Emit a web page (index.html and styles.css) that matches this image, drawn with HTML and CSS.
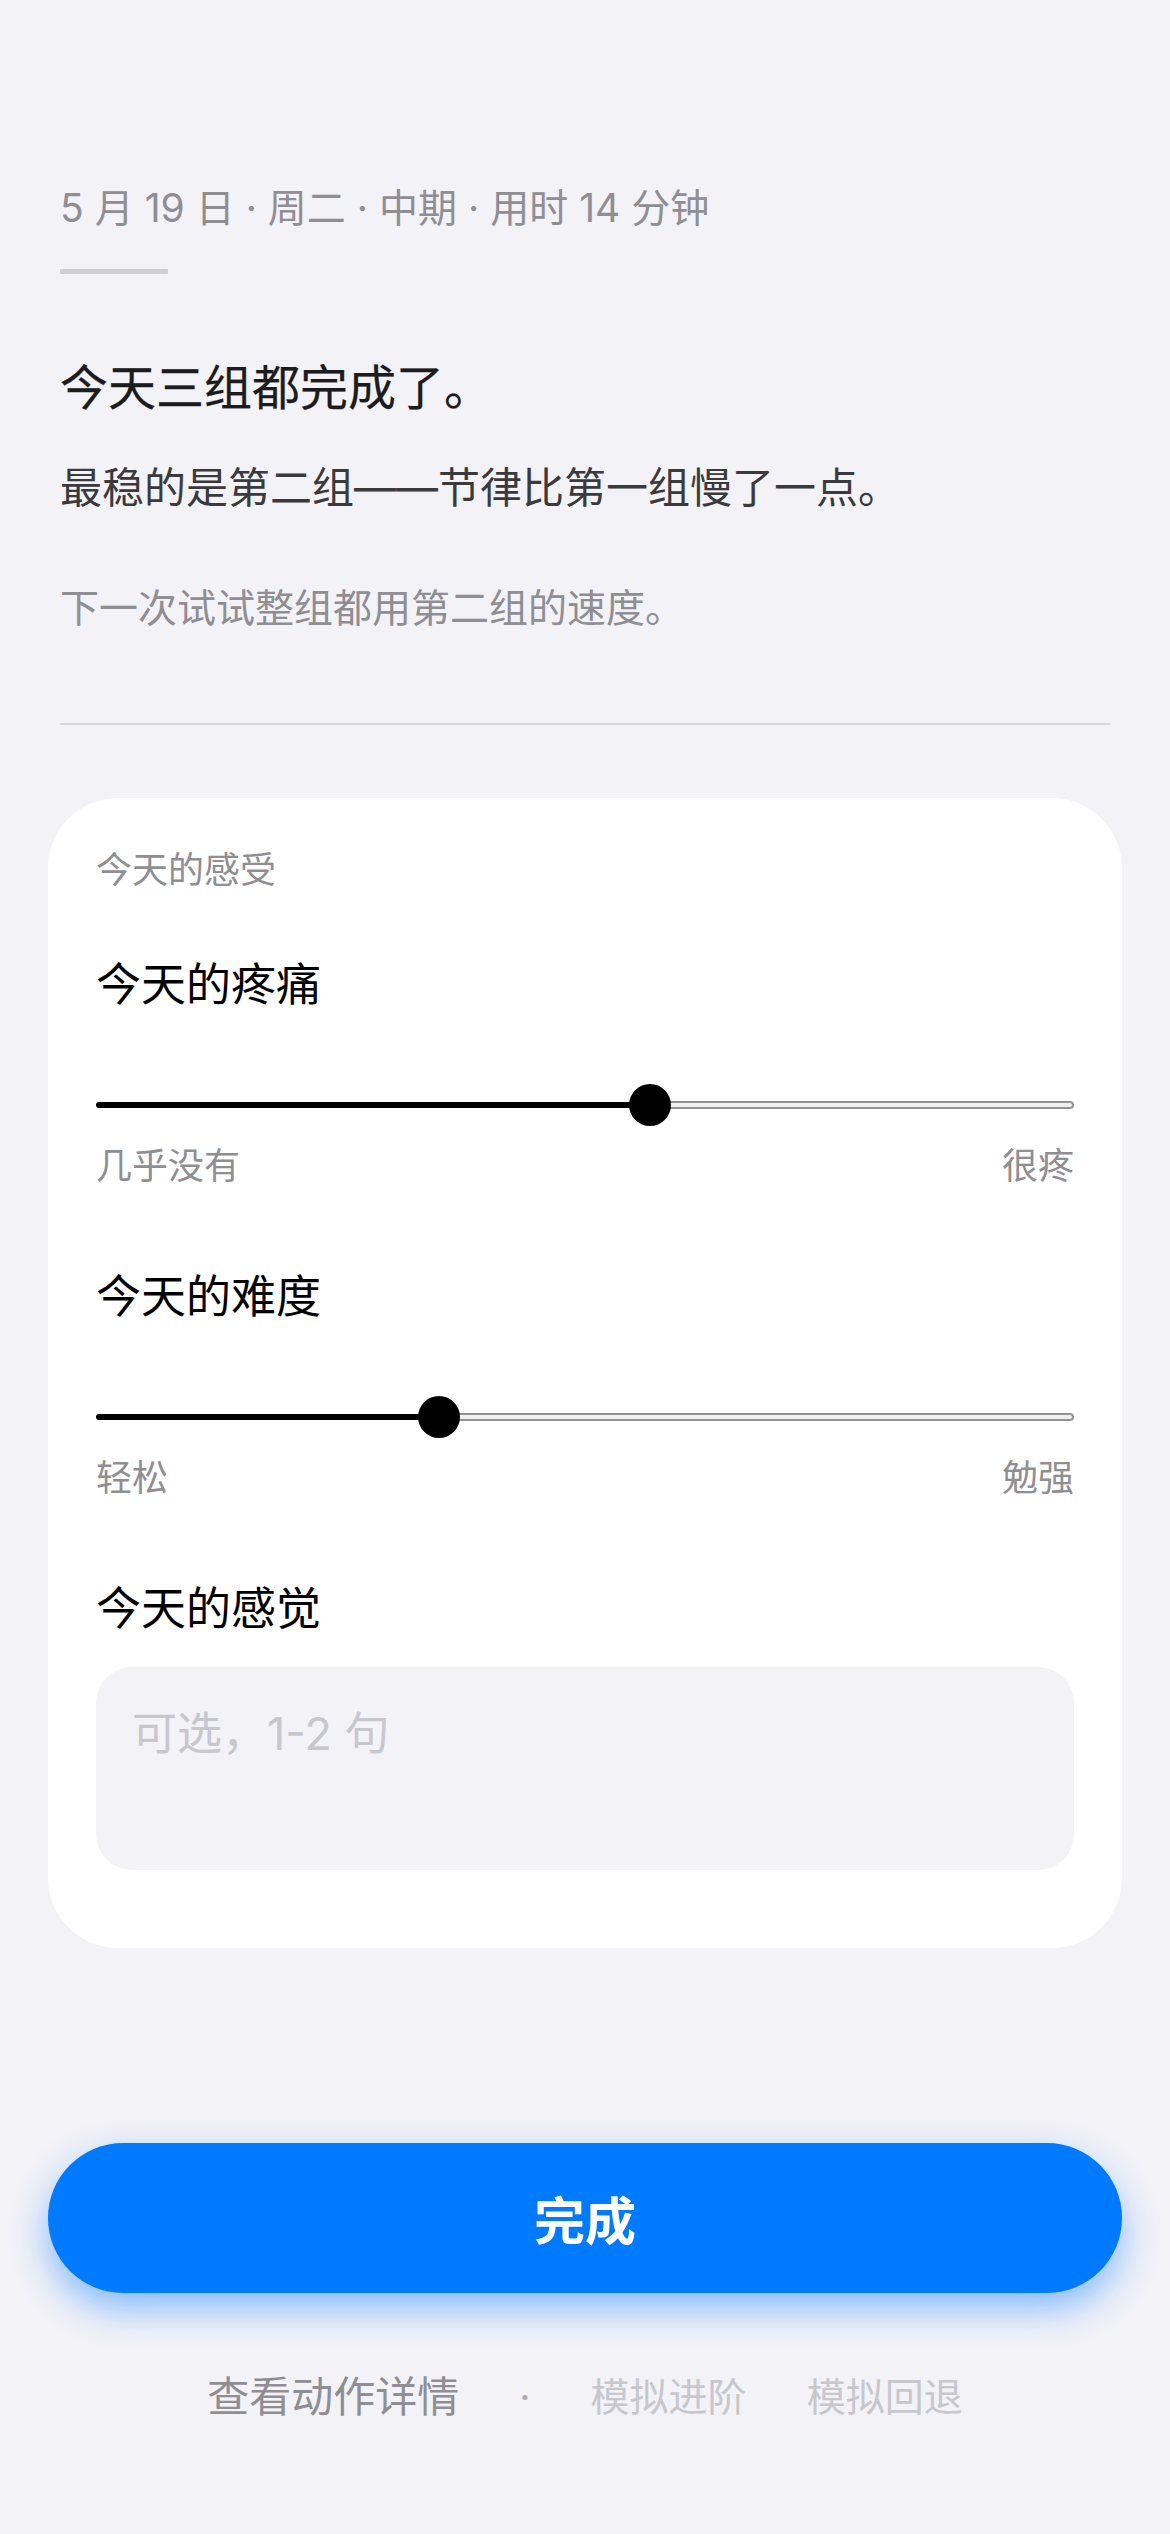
FILE: index.html
```html
<!DOCTYPE html>
<html lang="zh-CN">
<head>
<meta charset="utf-8">
<title>今天的训练</title>
<link rel="stylesheet" href="styles.css">
</head>
<body>
<main class="screen">
  <section class="summary">
    <p class="date">5 月 19 日 · 周二 · 中期 · 用时 14 分钟</p>
    <div class="rule-short"></div>
    <h1 class="headline">今天三组都完成了。</h1>
    <p class="detail">最稳的是第二组——节律比第一组慢了一点。</p>
    <p class="hint">下一次试试整组都用第二组的速度。</p>
    <div class="rule-long"></div>
  </section>

  <section class="card">
    <p class="card-label">今天的感受</p>

    <h2 class="item-title first">今天的疼痛</h2>
    <div class="slider">
      <div class="fill" style="width: 56.6%"></div>
      <div class="thumb"></div>
      <div class="rest"></div>
    </div>
    <div class="scale-labels"><span>几乎没有</span><span>很疼</span></div>

    <h2 class="item-title">今天的难度</h2>
    <div class="slider">
      <div class="fill" style="width: 35.1%"></div>
      <div class="thumb"></div>
      <div class="rest"></div>
    </div>
    <div class="scale-labels"><span>轻松</span><span>勉强</span></div>

    <h2 class="item-title">今天的感觉</h2>
    <div class="note"><span class="placeholder">可选，1-2 句</span></div>
  </section>

  <button class="done-btn" type="button">完成</button>

  <nav class="links">
    <span class="link-main">查看动作详情</span>
    <span class="link-dot">·</span>
    <span class="link-dim">模拟进阶</span>
    <span class="link-dim">模拟回退</span>
  </nav>
</main>
</body>
</html>
```

FILE: styles.css
```css
* {
  box-sizing: border-box;
}

html, body {
  margin: 0;
  padding: 0;
}

body {
  background: #f2f2f7;
  font-family: Inter, "Noto Sans CJK SC", "Noto Sans", sans-serif;
  color: #000;
  width: 1170px;
  min-height: 2534px;
}

.screen {
  display: flex;
  flex-direction: column;
  padding-top: 181px;
}

.summary {
  display: flex;
  flex-direction: column;
  padding: 0 60px;
}

.date {
  margin: 0;
  font-size: 39px;
  line-height: 54px;
  color: #8e8e93;
}

.rule-short {
  margin-top: 34px;
  width: 108px;
  height: 5px;
  background: #cfcfd4;
  border-radius: 1px;
}

.headline {
  margin: 82px 0 0;
  font-size: 48px;
  line-height: 64px;
  font-weight: 400;
  color: #1c1c1e;
  -webkit-text-stroke: 0.25px #1c1c1e;
}

.detail {
  margin: 38px 0 0;
  font-size: 42px;
  line-height: 60px;
  color: #3a3a3c;
}

.hint {
  margin: 62px 0 0;
  font-size: 39px;
  line-height: 56px;
  color: #8e8e93;
}

.rule-long {
  margin-top: 87px;
  height: 2px;
  background: #d8d8dc;
}

.card {
  margin: 73px 48px 0;
  background: #fff;
  border-radius: 70px;
  padding: 47px 48px 78px;
  display: flex;
  flex-direction: column;
}

.card-label {
  margin: 0;
  font-size: 36px;
  line-height: 50px;
  color: #8e8e93;
}

.item-title {
  margin: 76px 0 0;
  font-size: 45px;
  line-height: 60px;
  font-weight: 400;
  color: #000;
}

.item-title.first {
  margin-top: 60px;
}

.slider {
  margin-top: 69px;
  height: 42px;
  display: flex;
  align-items: center;
}

.fill {
  height: 6px;
  background: #000;
  border-radius: 3px 0 0 3px;
}

.thumb {
  position: relative;
  z-index: 1;
  flex: none;
  width: 42px;
  height: 42px;
  margin: 0 -21px;
  border-radius: 50%;
  background: #000;
}

.rest {
  flex: 1;
  height: 8px;
  background: #f0f0f0;
  border: 2px solid #939393;
  border-left: none;
  border-radius: 0 4px 4px 0;
}

.scale-labels {
  margin-top: 15px;
  display: flex;
  justify-content: space-between;
  font-size: 36px;
  line-height: 50px;
  color: #8e8e93;
}

.note {
  margin-top: 28px;
  height: 203px;
  background: #f2f2f7;
  border-radius: 36px;
  padding: 37px 36px;
}

.placeholder {
  font-size: 45px;
  line-height: 60px;
  color: #c7c7cc;
}

.done-btn {
  margin: 195px 48px 0;
  height: 150px;
  border: none;
  border-radius: 75px;
  background: #007aff;
  color: #fff;
  font-family: Inter, "Noto Sans CJK SC", sans-serif;
  font-size: 51px;
  font-weight: 700;
  box-shadow: 0 16px 36px rgba(0, 122, 255, 0.45);
}

.links {
  margin-top: 76px;
  display: flex;
  justify-content: center;
  align-items: center;
  gap: 60px;
  line-height: 56px;
}

.link-main {
  font-size: 42px;
  color: #8e8e93;
}

.link-dot {
  font-size: 39px;
  color: #aeaeb2;
}

.link-dim {
  font-size: 39px;
  color: #c7c7cc;
}
```
